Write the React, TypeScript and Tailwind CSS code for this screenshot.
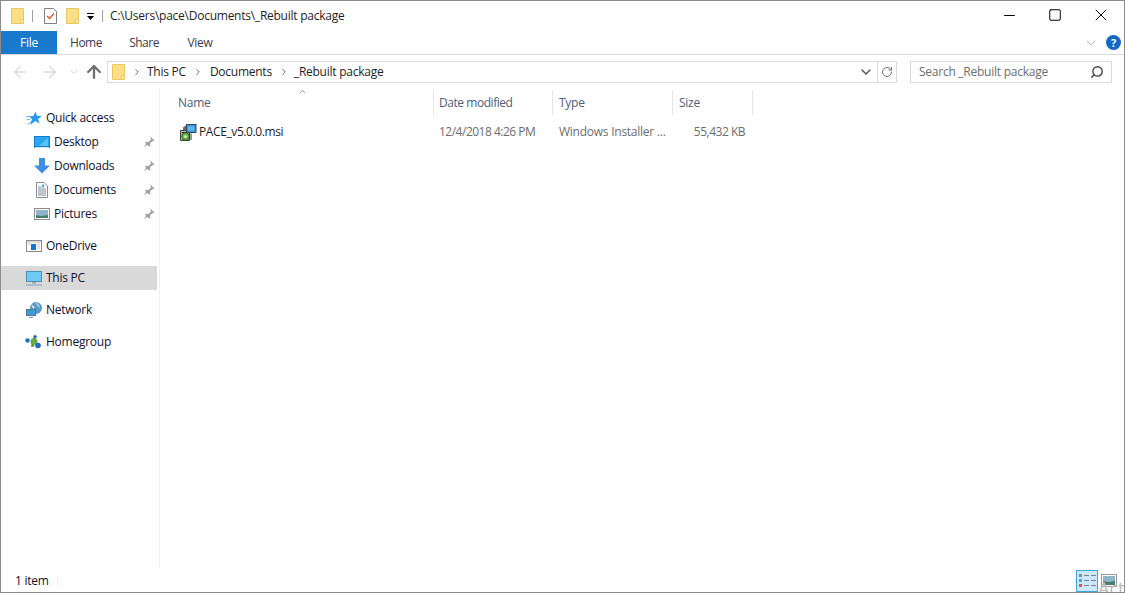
import { ChevronDown, ChevronUp, RotateCw, Search, Minus, Square, X, ArrowLeft, ArrowRight, ArrowUp, ChevronRight } from 'lucide-react';

function Folder({ className = '' }: { className?: string }) {
  return (
    <svg width="13" height="16" viewBox="0 0 13 16" className={className}>
      <path d="M.5.5h12v15H.5z" fill="#fcdf85" stroke="#e8c662" />
      <path d="M9.5 15.5v-4h3" fill="#fff6cf" stroke="#e8c662" />
    </svg>
  );
}

function Pin() {
  return (
    <svg width="12" height="12" viewBox="0 0 12 12">
      <path d="M7.500 .5l4 4-1 .8-1-.2-2.500 2.400.2 2.500-1 .8-4-4 .8-1 2.500.2 2.400-2.500-.2-1z" fill="#a3a3a3" />
      <path d="M3.800 7.200L.5 11.500l4.300-3.300z" fill="#8f8f8f" />
    </svg>
  );
}

function NavIcon({ name }: { name: string }) {
  if (name === 'star')
    return (
      <svg width="16" height="15" viewBox="0 0 16 15">
        <path d="M9.300 .5l1.700 4.300 4.800.2-3.600 2.900 1.200 4.600-4-2.600-5.400 4.100 2-5.800-2.800-3.100 4.200-.1z" fill="#2a9be6" />
        <path d="M0 5.500h4.500M.5 8.500h3.500M1.500 13.500l3.500-3" stroke="#6fbdf0" strokeWidth="1" />
      </svg>
    );
  if (name === 'desktop')
    return (
      <svg width="16" height="13" viewBox="0 0 16 13">
        <rect width="16" height="12" fill="#0f7dd0" />
        <rect x="1" y="1" width="14" height="9" fill="#2ba7f0" />
        <path d="M5 10l9-8v8z" fill="#5cc1f7" />
        <rect x="1" y="11" width="14" height="1" fill="#c9e6f8" />
      </svg>
    );
  if (name === 'down')
    return (
      <svg width="16" height="16" viewBox="0 0 16 16">
        <path d="M5 0h6v7.500h5L8 15.500 0 7.500h5z" fill="#3e8fdf" />
      </svg>
    );
  if (name === 'doc')
    return (
      <svg width="12" height="16" viewBox="0 0 12 16">
        <path d="M.5.5h7.500l3.500 3.500v11.500h-11z" fill="#fff" stroke="#8a8a8a" />
        <path d="M2 5h3M2 7h8M2 9h8M2 11h8M2 13h8" stroke="#7c8b9a" />
        <path d="M6 2.500h2v3h-2z" fill="#4ea3e0" />
      </svg>
    );
  if (name === 'pic')
    return (
      <svg width="16" height="13" viewBox="0 0 16 13">
        <rect x=".5" y=".5" width="15" height="11" fill="#fff" stroke="#8a8a8a" />
        <rect x="2" y="2" width="12" height="8" fill="#8fb5ca" />
        <path d="M2 7l5 1 7-1v3H2z" fill="#4b7d6c" />
      </svg>
    );
  if (name === 'onedrive')
    return (
      <svg width="16" height="13" viewBox="0 0 16 13">
        <rect x=".5" y=".5" width="15" height="11" fill="#fff" stroke="#8a8a8a" />
        <rect x="1" y="1" width="14" height="2" fill="#dcdcdc" />
        <rect x="5" y="4" width="5" height="6" fill="#1473cf" />
        <path d="M11 4h3M11 6h3M11 8h3M2 4h2" stroke="#c6c6c6" />
      </svg>
    );
  if (name === 'pc')
    return (
      <svg width="16" height="15" viewBox="0 0 16 15">
        <rect x=".5" y=".5" width="15" height="10" fill="#6fcbf6" stroke="#4d8eb2" />
        <path d="M6 11h4v1.500H6z" fill="#8aa6b8" />
        <path d="M0 14h16" stroke="#9cb2c2" strokeWidth="1.500" />
      </svg>
    );
  if (name === 'network')
    return (
      <svg width="16" height="16" viewBox="0 0 16 16">
        <circle cx="10" cy="6" r="6" fill="#5c99c7" />
        <path d="M9 1c3 0 5 2 5 5-2-1-3-3-5-5z" fill="#a7cfe6" />
        <path d="M5 2l4 3-2 2z" fill="#d6e5ee" />
        <rect x=".5" y="7.500" width="9" height="6" fill="#3f9ad8" stroke="#4a7a9c" />
        <path d="M3 15.500h4" stroke="#7c98ac" />
      </svg>
    );
  return (
    <svg width="17" height="14" viewBox="0 0 17 14">
      <circle cx="2.500" cy="5.500" r="2.200" fill="#1c6fc0" />
      <circle cx="9" cy="6.500" r="3.500" fill="#6ca83f" />
      <circle cx="10" cy="1.800" r="1.800" fill="#1c6fc0" />
      <circle cx="13" cy="10.500" r="2.800" fill="#1c6fc0" />
      <circle cx="7.500" cy="10.500" r="1.500" fill="#4f9a33" />
    </svg>
  );
}

function NavRow({ icon, label, pinned, indent, active }: { icon: string; label: string; pinned?: boolean; indent?: boolean; active?: boolean }) {
  return (
    <div className={`h-6 flex items-center text-[#10102e] ${active ? 'bg-[#d9d9d9] w-[156px]' : 'w-[156px]'} ${indent ? 'pl-8' : 'pl-6'}`}>
      <span className="w-[17px] flex justify-center shrink-0">
        <NavIcon name={icon} />
      </span>
      <span className="ml-[4px] flex-1">{label}</span>
      {pinned && (
        <span className="mr-[2px]">
          <Pin />
        </span>
      )}
    </div>
  );
}

function MsiIcon() {
  return (
    <svg width="17" height="17" viewBox="0 0 17 17">
      <path d="M.5 6.500h9v10h-9z" fill="#bdbdbd" stroke="#3f3f3f" />
      <path d="M2 8.500h6M2 10.500h2" stroke="#222" />
      <path d="M3.500 3.500l3-2v5h-3z" fill="#6d6d6d" stroke="#3f3f3f" strokeWidth=".6" />
      <rect x="6.500" y=".5" width="9.500" height="8" fill="#3f98d8" stroke="#2b4a60" />
      <path d="M8 2.500h6v4H8z" fill="#62b6ea" />
      <circle cx="5.500" cy="12.500" r="3.800" fill="#69b945" stroke="#1f4f14" strokeWidth=".8" />
      <circle cx="5.500" cy="12.500" r="1.200" fill="#f4f4f4" />
      <path d="M11 9.500v6.500" stroke="#333" />
    </svg>
  );
}

function HeaderCell({ label, width, tight }: { label: string; width: string; tight?: boolean }) {
  return (
    <div className={`${width} h-[25px] flex items-center border-r border-[#e5e5e5] text-[#4c607a] shrink-0 ${tight ? 'pl-[5px] tracking-[-0.45px]' : 'pl-[6px]'}`}>
      {label}
    </div>
  );
}

export default function App() {
  return (
    <div
      className="relative w-[1125px] h-[593px] overflow-hidden bg-white border border-[#8c8c8c] flex flex-col text-[12px] leading-4"
      style={{ fontFamily: '"Open Sans", "Noto Sans", sans-serif', letterSpacing: '-0.25px' }}
    >
      {/* title bar */}
      <div className="h-[30px] flex items-center shrink-0 text-[#1e1e1e]">
        <Folder className="ml-[10px]" />
        <div className="w-px h-[12px] bg-[#a0a0a0] ml-[8px]" />
        <svg width="13" height="16" viewBox="0 0 13 16" className="ml-[11px]">
          <path d="M.5.5h9l3 3v12h-12z" fill="#fff" stroke="#808080" />
          <path d="M3 8l2.500 2.500 4.500-5" fill="none" stroke="#e2562a" strokeWidth="1.400" />
        </svg>
        <Folder className="ml-[9px]" />
        <svg width="7" height="8" viewBox="0 0 7 8" className="ml-[8px] mt-[2px]">
          <path d="M0 .5h7" stroke="#000" />
          <path d="M0 3h7L3.500 7z" fill="#000" />
        </svg>
        <div className="w-px h-[12px] bg-[#a0a0a0] ml-[8px]" />
        <span className="ml-[7px]">C:\Users\pace\Documents\_Rebuilt package</span>
        <div className="ml-auto flex items-center -mt-[2px] mr-[13px]">
          <Minus className="w-[17px] h-[17px] mr-[30px] text-black" strokeWidth={1.4} />
          <Square className="w-[14px] h-[14px] mr-[29px] text-black" strokeWidth={1.7} />
          <X className="w-[20px] h-[20px] text-black" strokeWidth={1.2} />
        </div>
      </div>

      {/* ribbon tabs */}
      <div className="h-[24px] flex items-stretch shrink-0 border-b border-[#dadbdc]">
        <div className="w-[56px] bg-[#1979ca] text-white flex items-center justify-center pt-px">File</div>
        <div className="w-[58px] flex items-center justify-center text-[#3b3b4f] pt-px tracking-[-0.5px]">Home</div>
        <div className="w-[58px] flex items-center justify-center text-[#3b3b4f] pt-px tracking-[-0.5px]">Share</div>
        <div className="w-[58px] flex items-center justify-center text-[#3b3b4f] pt-px -ml-[2px]">View</div>
        <div className="ml-auto flex items-center mr-[3px]">
          <ChevronDown className="w-[16px] h-[16px] text-[#b5b5b5] mr-[7px]" strokeWidth={1.4} />
          <div className="w-[15px] h-[15px] rounded-full bg-[#1468c4] text-white font-bold text-[11px] flex items-center justify-center">?</div>
        </div>
      </div>

      {/* address row */}
      <div className="h-[33px] flex items-center shrink-0">
        <div className="w-[106px] flex items-center shrink-0">
          <ArrowLeft className="ml-[10px] w-[18px] h-[18px] text-[#dcdcdc]" strokeWidth={2} />
          <ArrowRight className="ml-[12px] w-[18px] h-[18px] text-[#dcdcdc]" strokeWidth={2} />
          <ChevronDown className="ml-[9px] w-[12px] h-[12px] text-[#d4d4d4]" strokeWidth={2} />
          <ArrowUp className="ml-[4px] w-[20px] h-[20px] text-[#707070]" strokeWidth={2.8} />
        </div>
        <div className="w-[790px] h-[22px] border border-[#d9d9d9] flex items-center shrink-0 text-[#1e1e1e]">
          <Folder className="ml-[4px]" />
          <ChevronRight className="ml-[7px] w-[10px] h-[10px] text-[#6d6d6d]" strokeWidth={2.4} />
          <span className="ml-[5px]">This PC</span>
          <ChevronRight className="ml-[7px] w-[10px] h-[10px] text-[#6d6d6d]" strokeWidth={2.4} />
          <span className="ml-[7px]">Documents</span>
          <ChevronRight className="ml-[7px] w-[10px] h-[10px] text-[#6d6d6d]" strokeWidth={2.4} />
          <span className="ml-[5px]">_Rebuilt package</span>
          <ChevronDown className="ml-auto mr-[3px] w-[16px] h-[16px] text-[#555]" strokeWidth={2.2} />
          <div className="w-[19px] h-full border-l border-[#d9d9d9] flex items-center justify-center">
            <RotateCw className="w-[12px] h-[12px] text-[#6d6d6d]" strokeWidth={2} />
          </div>
        </div>
        <div className="ml-[13px] w-[202px] h-[22px] border border-[#d9d9d9] flex items-center justify-between pl-[8px] pr-[7px] text-[#6d6d6d] shrink-0">
          <span>Search _Rebuilt package</span>
          <Search className="w-[14px] h-[14px] text-[#444] -scale-x-100" strokeWidth={2.4} />
        </div>
      </div>

      {/* body */}
      <div className="flex-1 flex min-h-0">
        <div className="w-[159px] shrink-0 border-r border-[#f0f0f0] pt-[18px] flex flex-col gap-2">
          <div>
            <NavRow icon="star" label="Quick access" />
            <NavRow icon="desktop" label="Desktop" pinned indent />
            <NavRow icon="down" label="Downloads" pinned indent />
            <NavRow icon="doc" label="Documents" pinned indent />
            <NavRow icon="pic" label="Pictures" pinned indent />
          </div>
          <NavRow icon="onedrive" label="OneDrive" />
          <NavRow icon="pc" label="This PC" active />
          <NavRow icon="network" label="Network" />
          <NavRow icon="homegroup" label="Homegroup" />
        </div>
        <div className="flex-1 relative">
          <ChevronUp className="absolute left-[137px] top-[-1px] w-[11px] h-[9px] text-[#707070]" strokeWidth={2} />
          <div className="flex ml-[12px] pt-[2px]">
            <HeaderCell label="Name" width="w-[262px]" />
            <HeaderCell label="Date modified" width="w-[119px]" tight />
            <HeaderCell label="Type" width="w-[120px]" />
            <HeaderCell label="Size" width="w-[80px]" />
          </div>
          <div className="flex items-center h-[22px] ml-[12px] mt-[6px] text-[#6d6d6d]">
            <div className="w-[262px] flex items-center pl-[8px] text-[#1e1e1e] shrink-0 tracking-[-0.4px]">
              <MsiIcon />
              <span className="ml-[2px]">PACE_v5.0.0.msi</span>
            </div>
            <div className="w-[119px] pl-[5px] shrink-0 tracking-[-0.5px]">12/4/2018 4:26 PM</div>
            <div className="w-[120px] pl-[6px] shrink-0">Windows Installer ...</div>
            <div className="w-[72px] text-right shrink-0 tracking-[-0.5px]">55,432 KB</div>
          </div>
        </div>
      </div>

      {/* status bar */}
      <div className="h-[23px] flex items-center shrink-0 text-[#10102e]">
        <span className="w-[57px] pl-[14px] border-r border-[#f0f0f0] h-[12px] flex items-center">1 item</span>
        <div className="ml-auto flex items-center mr-[7px]">
          <div className="w-[22px] h-[22px] bg-[#cce8ff] border border-[#3fa3dc] flex flex-col items-center justify-center gap-[2px]">
            {['#8a8a8a', '#4ea3e0', '#d9534f'].map((c) => (
              <div key={c} className="flex items-center gap-[2px]">
                <span className="w-[3px] h-[3px]" style={{ backgroundColor: c }} />
                <span className="w-[5px] h-px bg-[#808080]" />
                <span className="w-[5px] h-px bg-[#808080]" />
              </div>
            ))}
          </div>
          <svg width="16" height="13" viewBox="0 0 16 13" className="ml-[3px]">
            <rect x=".5" y=".5" width="15" height="12" fill="#fff" stroke="#9a9a9a" />
            <rect x="2" y="2" width="12" height="9" fill="#8fb5ca" />
            <path d="M2 7l5 1 7-1v4H2z" fill="#4b7d6c" />
          </svg>
        </div>
      </div>

      {/* activation watermark */}
      <span className="absolute left-[1097px] top-[575px] text-[18px] leading-6 text-[#bbbbbb]" style={{ letterSpacing: 0 }}>
        Act
      </span>
    </div>
  );
}
